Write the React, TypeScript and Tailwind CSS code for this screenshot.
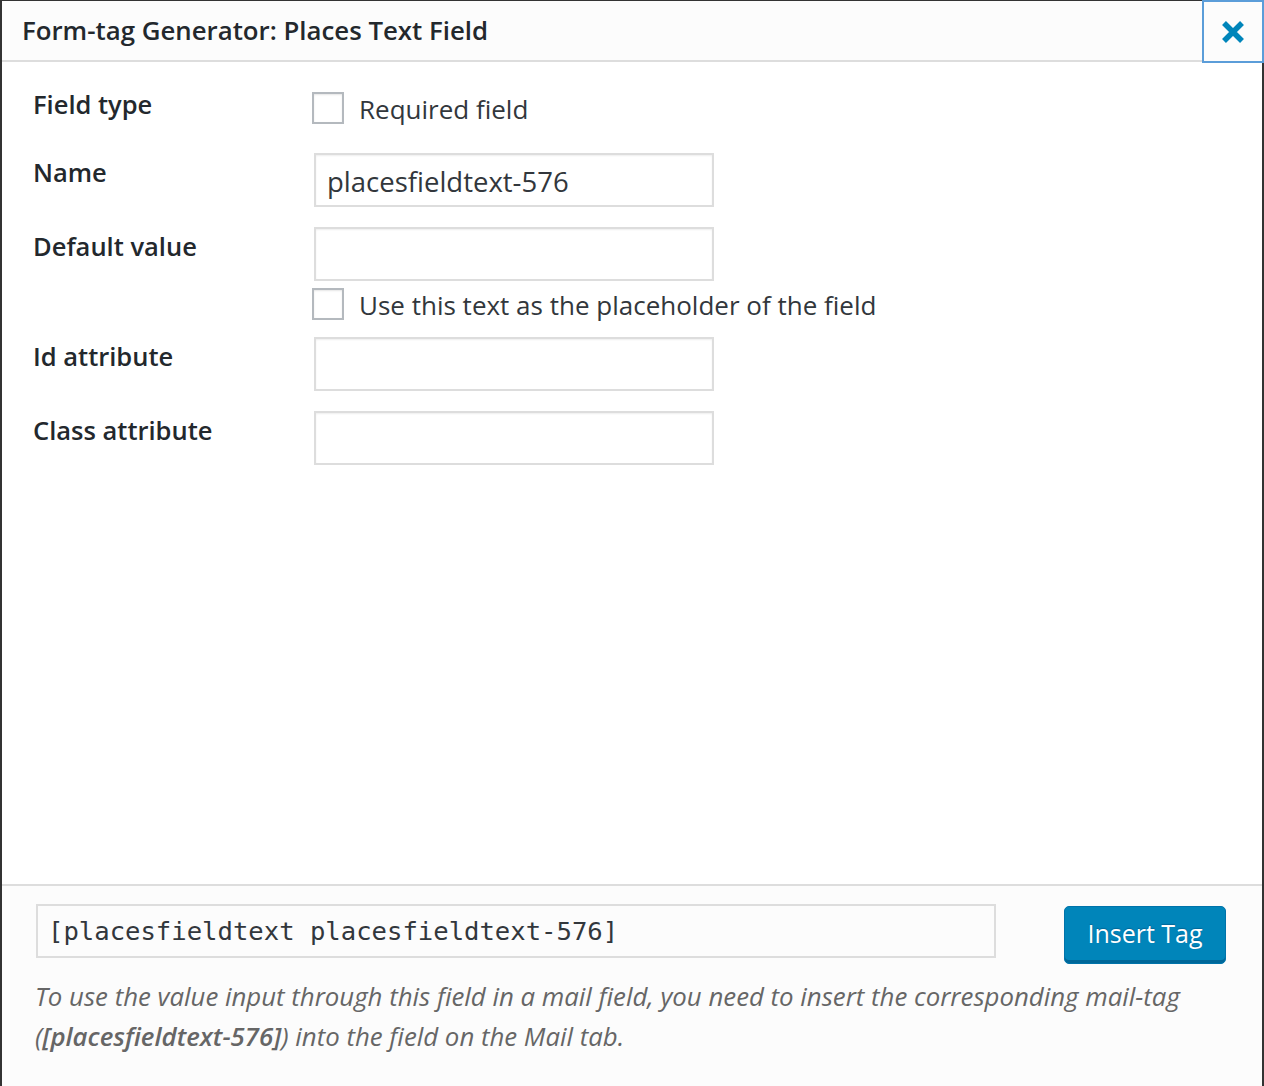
import React from "react";

const labelCls =
  "w-[281px] shrink-0 pt-[4px] text-[25.5px] leading-[30px] font-semibold text-[#23282d]";
const inputCls =
  "h-[54px] w-[400px] border-2 border-[#ddd] bg-white px-[11px] pt-[2px] text-[27.5px] text-[#32373c] shadow-[inset_0_1px_2px_rgba(0,0,0,0.07)] outline-none";

function Check({ label }: { label: string }) {
  return (
    <label className="flex items-center">
      <span className="ml-[-2px] h-[32px] w-[32px] border-2 border-[#b4b9be] bg-white shadow-[inset_0_1px_2px_rgba(0,0,0,0.1)]" />
      <span className="ml-[15px] mt-[2px] whitespace-nowrap text-[26px] leading-[30px] text-[#32373c]">
        {label}
      </span>
    </label>
  );
}

export default function App() {
  return (
    <div
      className="relative flex h-[1086px] w-[1264px] flex-col border-x-2 border-t border-[#333] bg-white"
      style={{ fontFamily: '"Open Sans", "Noto Sans", sans-serif' }}
    >
      <div className="flex h-[61px] shrink-0 items-center border-b-2 border-[#ddd] bg-[#fcfcfc] pl-[20px] pr-[62px]">
        <h1 className="text-[25.8px] font-semibold text-[#23282d]">
          Form-tag Generator: Places Text Field
        </h1>
      </div>
      <button className="absolute right-[-2px] top-[-1px] flex h-[63px] w-[62px] items-center justify-center border-2 border-[#5b9dd9] bg-[#fcfcfc]">
        <svg width="24" height="24" viewBox="0 0 24 24">
          <path
            d="M3 3 L21 21 M21 3 L3 21"
            stroke="#0085ba"
            strokeWidth="5.5"
            strokeLinecap="butt"
            fill="none"
          />
        </svg>
      </button>

      <div className="flex-1 pl-[31px] pt-[23px]">
        <div className="flex">
          <div className={labelCls}>Field type</div>
          <div className="pt-[7px]">
            <Check label="Required field" />
          </div>
        </div>
        <div className="mt-[29px] flex">
          <div className={labelCls}>Name</div>
          <input className={inputCls} defaultValue="placesfieldtext-576" />
        </div>
        <div className="mt-[20px] flex">
          <div className={labelCls}>Default value</div>
          <div className="flex flex-col">
            <input className={inputCls} />
            <div className="mt-[7px]">
              <Check label="Use this text as the placeholder of the field" />
            </div>
          </div>
        </div>
        <div className="mt-[17px] flex">
          <div className={labelCls}>Id attribute</div>
          <input className={inputCls} />
        </div>
        <div className="mt-[20px] flex">
          <div className={labelCls}>Class attribute</div>
          <input className={inputCls} />
        </div>
      </div>

      <div className="h-[202px] shrink-0 border-t-2 border-[#ddd] bg-[#fcfcfc] pl-[34px] pr-[36px] pt-[18px]">
        <div className="flex items-start justify-between">
          <input
            readOnly
            className="h-[54px] w-[960px] border-2 border-[#ddd] bg-[#fcfcfc] px-[10px] text-[25.6px] text-[#32373c] outline-none"
            style={{ fontFamily: '"DejaVu Sans Mono", monospace' }}
            defaultValue="[placesfieldtext placesfieldtext-576]"
          />
          <button className="mt-[2px] h-[58px] w-[162px] rounded-[5px] border border-[#0073aa] bg-[#0085ba] pb-[3px] text-[25px] text-white shadow-[inset_0_-3px_0_#006799] [text-shadow:0_-1px_1px_#006799]">
            Insert Tag
          </button>
        </div>
        <p className="ml-[-1px] mt-[12px] text-[25.8px] italic leading-[40px] text-[#666]">
          To use the value input through this field in a mail field, you need to insert the corresponding mail-tag
          (<strong className="font-semibold">[placesfieldtext-576]</strong>) into the field on the Mail tab.
        </p>
      </div>
    </div>
  );
}
